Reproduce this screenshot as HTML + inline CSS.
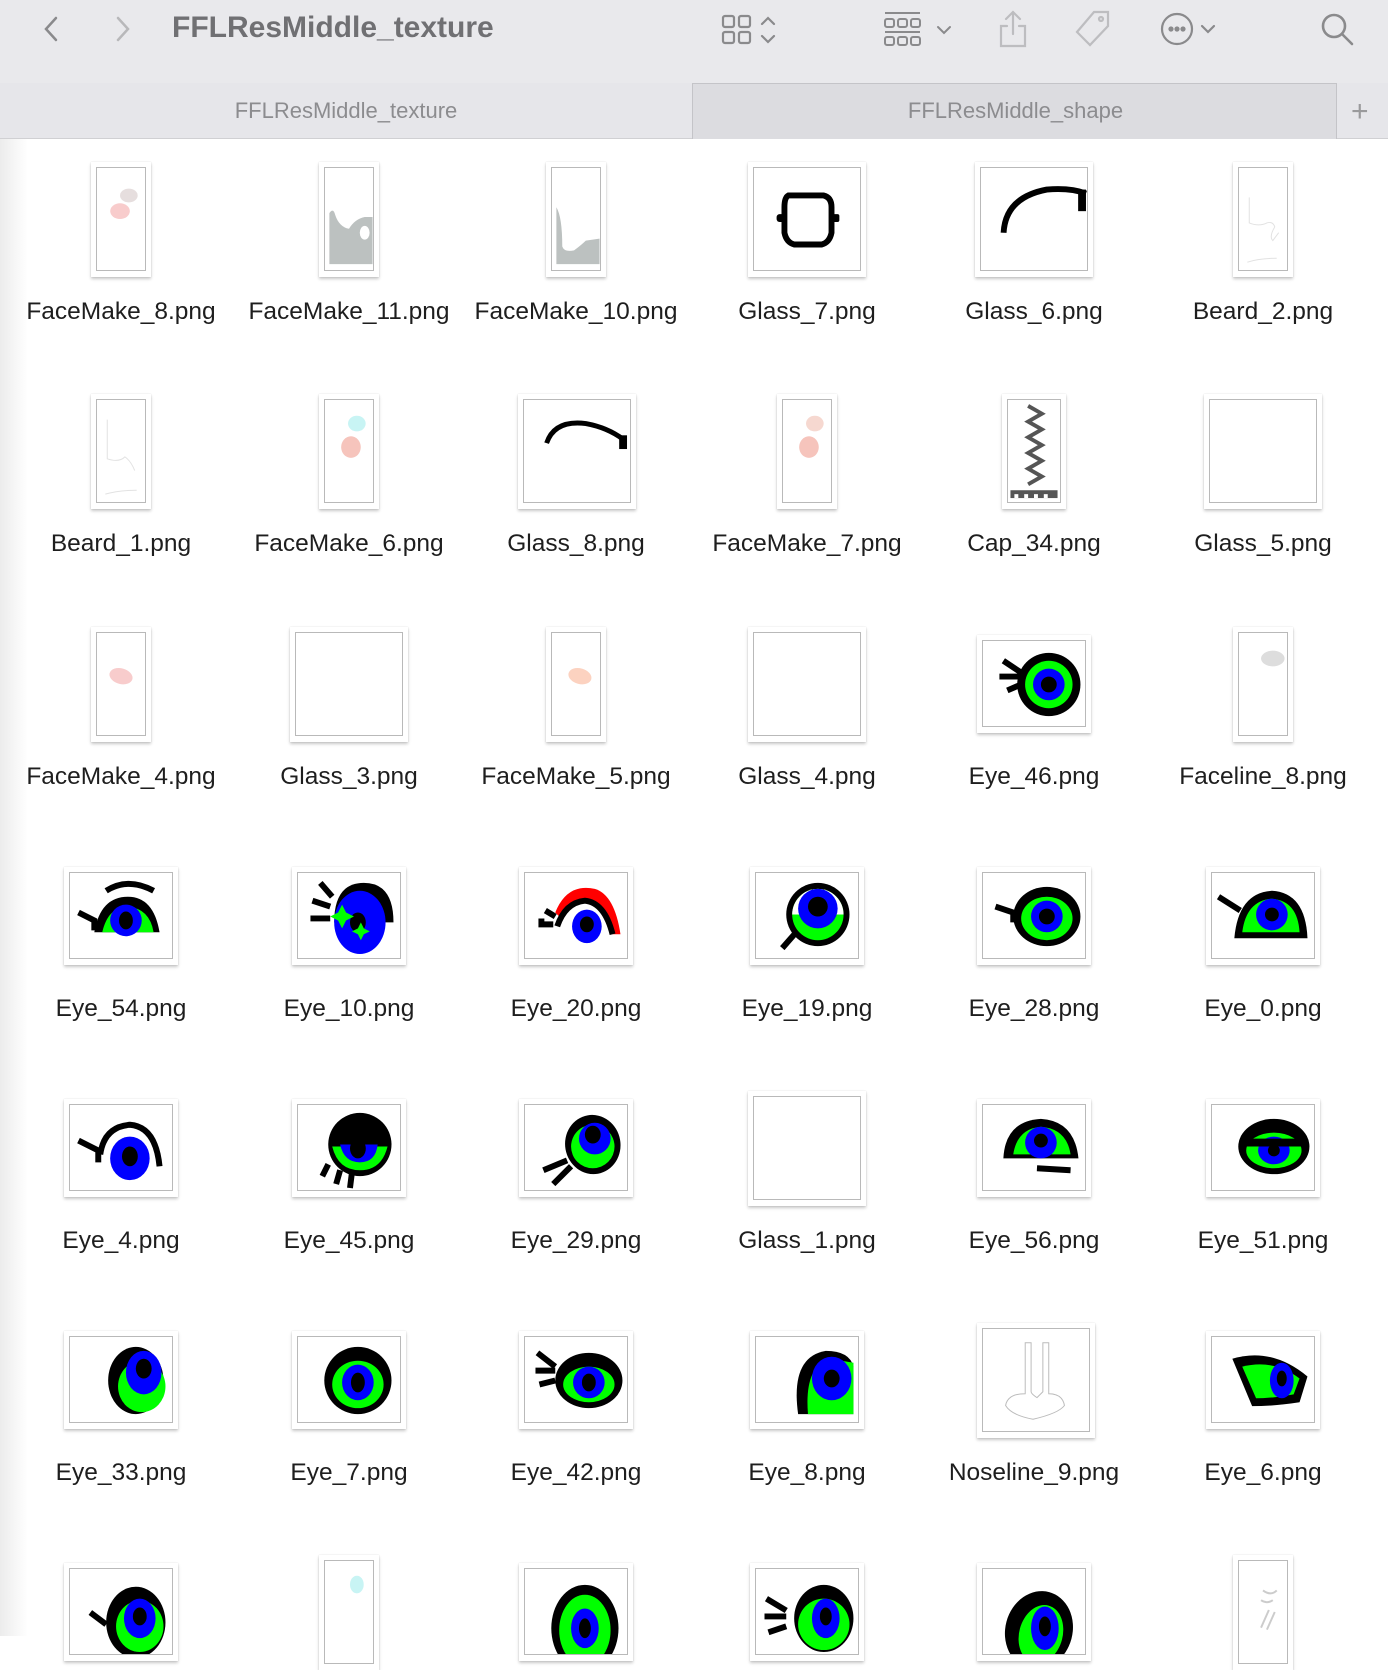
<!DOCTYPE html>
<html><head><meta charset="utf-8"><style>
*{margin:0;padding:0;box-sizing:border-box}
body{width:1388px;height:1636px;overflow:hidden;background:#fff;font-family:"Liberation Sans",Arial,sans-serif;position:relative}
.tb{position:absolute;left:0;top:0;width:1388px;height:83px;background:#e9e9ec}
.tabs{position:absolute;left:0;top:83px;width:1388px;height:56px;background:#e6e6ea;border-bottom:1px solid #d0d0d3}
.tab2{position:absolute;left:692px;top:0;width:645px;height:56px;background:#dcdce0;border-left:1px solid #c4c4c8;border-right:1px solid #c4c4c8;border-top:1px solid #c4c4c8}
.tt{position:absolute;top:15px;font-size:22px;color:#8c8c8f;text-align:center}
.side{position:absolute;left:0;top:139px;width:28px;height:1497px;background:linear-gradient(to right,#ececec,#fff)}
.i{position:absolute;background:#fff;box-shadow:0 2px 3px rgba(0,0,0,.22),0 0 1px rgba(0,0,0,.15)}
.b{position:absolute;left:5px;top:5px;right:5px;bottom:6px;border:1px solid #b9b9b9;overflow:hidden}
.b svg{width:100%;height:100%;display:block}
.l{position:absolute;width:228px;margin-left:-114px;text-align:center;font-size:24.5px;color:#1e1e1e;white-space:nowrap}
</style></head><body>
<div class="tb">
<svg style="position:absolute;left:40px;top:14px" width="24" height="30"><path d="M16 4 L6 15 L16 26" fill="none" stroke="#8a8a8c" stroke-width="2.5" stroke-linecap="round"/></svg>
<svg style="position:absolute;left:110px;top:14px" width="24" height="30"><path d="M8 4 L18 15 L8 26" fill="none" stroke="#b8b8ba" stroke-width="2.5" stroke-linecap="round"/></svg>
<div style="position:absolute;left:172px;top:11px;font-size:30px;font-weight:bold;color:#707073">FFLResMiddle_texture</div>
<svg style="position:absolute;left:720px;top:12px" width="70" height="36" fill="none" stroke="#8a8a8c" stroke-width="2.2"><rect x="3" y="4" width="11" height="11" rx="2"/><rect x="19" y="4" width="11" height="11" rx="2"/><rect x="3" y="20" width="11" height="11" rx="2"/><rect x="19" y="20" width="11" height="11" rx="2"/><path d="M42 12 L48 6 L54 12 M42 24 L48 30 L54 24" stroke-linecap="round"/></svg>
<svg style="position:absolute;left:882px;top:10px" width="76" height="40" fill="none" stroke="#8a8a8c" stroke-width="2"><path d="M3 3 H38"/><rect x="3" y="9" width="9" height="8" rx="2"/><rect x="16" y="9" width="9" height="8" rx="2"/><rect x="29" y="9" width="9" height="8" rx="2"/><path d="M3 22 H38"/><rect x="3" y="27" width="9" height="8" rx="2"/><rect x="16" y="27" width="9" height="8" rx="2"/><rect x="29" y="27" width="9" height="8" rx="2"/><path d="M56 17 L62 23 L68 17" stroke-linecap="round"/></svg>
<svg style="position:absolute;left:996px;top:8px" width="34" height="42" fill="none" stroke="#bdbdc0" stroke-width="2.2"><path d="M17 4 V26 M10 11 L17 4 L24 11 M11 18 H5 V38 H29 V18 H23" stroke-linecap="round"/></svg>
<svg style="position:absolute;left:1072px;top:8px" width="42" height="42" fill="none" stroke="#bdbdc0" stroke-width="2.2"><path d="M22 4 H36 V18 L18 37 L5 24 Z"/><circle cx="29" cy="11" r="2"/></svg>
<svg style="position:absolute;left:1158px;top:10px" width="70" height="40" fill="none" stroke="#8a8a8c" stroke-width="2.2"><circle cx="19" cy="19" r="15"/><circle cx="13" cy="19" r="1.5" fill="#8a8a8c"/><circle cx="19" cy="19" r="1.5" fill="#8a8a8c"/><circle cx="25" cy="19" r="1.5" fill="#8a8a8c"/><path d="M44 16 L50 22 L56 16" stroke-linecap="round"/></svg>
<svg style="position:absolute;left:1318px;top:10px" width="40" height="40" fill="none" stroke="#8a8a8c" stroke-width="2.6"><circle cx="16" cy="16" r="11"/><path d="M24 24 L34 34" stroke-linecap="round"/></svg>
</div>
<div class="tabs">
<div class="tt" style="left:0;width:692px">FFLResMiddle_texture</div>
<div class="tab2"><div class="tt" style="left:0;width:645px;top:14px">FFLResMiddle_shape</div></div>
<div style="position:absolute;left:1351px;top:12px;font-size:30px;color:#9a9a9c;font-weight:300">+</div>
</div>
<div class="side"></div>

<div class="i" style="left:91px;top:162px;width:60px;height:115px"><div class="b"><svg viewBox="0 0 48 104"><ellipse cx="32" cy="28" rx="9" ry="7" fill="#e6dede"/><ellipse cx="23" cy="44" rx="10" ry="8" fill="#f8cccc"/></svg></div></div>
<div class="l" style="left:121px;top:298px">FaceMake_8.png</div>
<div class="i" style="left:319px;top:162px;width:60px;height:115px"><div class="b"><svg viewBox="0 0 48 104"><path d="M4 46 Q8 40 10 48 Q14 60 24 62 Q30 52 40 50 L48 50 V98 H4 Z" fill="#bcc1c0"/><ellipse cx="40" cy="66" rx="5" ry="7" fill="#fff"/></svg></div></div>
<div class="l" style="left:349px;top:298px">FaceMake_11.png</div>
<div class="i" style="left:546px;top:162px;width:60px;height:115px"><div class="b"><svg viewBox="0 0 48 104"><path d="M4 40 Q10 50 10 80 Q12 86 22 84 Q30 78 34 74 L48 72 V98 H4 Z" fill="#bcc1c0"/></svg></div></div>
<div class="l" style="left:576px;top:298px">FaceMake_10.png</div>
<div class="i" style="left:748px;top:162px;width:118px;height:115px"><div class="b"><svg viewBox="0 0 106 104"><path d="M34 28 H70 Q78 30 78 40 V66 Q76 76 68 78 H40 Q32 76 30 66 V40 Q30 30 34 28 Z" fill="none" stroke="#000" stroke-width="6"/><rect x="22" y="47" width="8" height="8" rx="3"/><rect x="78" y="47" width="8" height="8" rx="2"/></svg></div></div>
<div class="l" style="left:807px;top:298px">Glass_7.png</div>
<div class="i" style="left:975px;top:162px;width:118px;height:115px"><div class="b"><svg viewBox="0 0 106 104"><path d="M22 66 Q24 30 66 22 Q90 20 106 26" fill="none" stroke="#000" stroke-width="6"/><rect x="98" y="22" width="8" height="22"/></svg></div></div>
<div class="l" style="left:1034px;top:298px">Glass_6.png</div>
<div class="i" style="left:1233px;top:162px;width:60px;height:115px"><div class="b"><svg viewBox="0 0 48 104"><path d="M10 30 V56 Q20 60 28 56 Q34 54 36 60 Q30 70 34 74 L40 66 M8 96 Q20 92 38 92" fill="none" stroke="#e2e2e2" stroke-width="1"/></svg></div></div>
<div class="l" style="left:1263px;top:298px">Beard_2.png</div>

<div class="i" style="left:91px;top:394px;width:60px;height:115px"><div class="b"><svg viewBox="0 0 48 104"><path d="M10 20 V60 Q22 64 28 58 Q34 62 38 72 M8 96 Q22 92 40 92" fill="none" stroke="#e2e2e2" stroke-width="1"/></svg></div></div>
<div class="l" style="left:121px;top:530px">Beard_1.png</div>
<div class="i" style="left:319px;top:394px;width:60px;height:115px"><div class="b"><svg viewBox="0 0 48 104"><ellipse cx="32" cy="24" rx="9" ry="8" fill="#c8f4f4"/><ellipse cx="26" cy="48" rx="10" ry="11" fill="#f6c4bc"/></svg></div></div>
<div class="l" style="left:349px;top:530px">FaceMake_6.png</div>
<div class="i" style="left:518px;top:394px;width:118px;height:115px"><div class="b"><svg viewBox="0 0 106 104"><path d="M22 44 Q30 20 62 24 Q84 28 100 40" fill="none" stroke="#000" stroke-width="5"/><rect x="96" y="36" width="8" height="14"/></svg></div></div>
<div class="l" style="left:576px;top:530px">Glass_8.png</div>
<div class="i" style="left:777px;top:394px;width:60px;height:115px"><div class="b"><svg viewBox="0 0 48 104"><ellipse cx="32" cy="24" rx="9" ry="8" fill="#f6d8d0"/><ellipse cx="26" cy="48" rx="10" ry="11" fill="#f6c4bc"/></svg></div></div>
<div class="l" style="left:807px;top:530px">FaceMake_7.png</div>
<div class="i" style="left:1002px;top:394px;width:64px;height:115px"><div class="b"><svg viewBox="0 0 52 104"><path d="M20 6 L34 14 L20 22 L34 30 L20 38 L34 46 L20 54 L34 62 L20 70 L34 78 L20 86" fill="none" stroke="#555" stroke-width="4"/><rect x="2" y="92" width="48" height="8" fill="#555"/><rect x="6" y="96" width="4" height="4" fill="#fff"/><rect x="16" y="96" width="4" height="4" fill="#fff"/><rect x="26" y="96" width="4" height="4" fill="#fff"/><rect x="36" y="96" width="4" height="4" fill="#fff"/></svg></div></div>
<div class="l" style="left:1034px;top:530px">Cap_34.png</div>
<div class="i" style="left:1204px;top:394px;width:118px;height:115px"><div class="b"></div></div>
<div class="l" style="left:1263px;top:530px">Glass_5.png</div>

<div class="i" style="left:91px;top:627px;width:60px;height:115px"><div class="b"><svg viewBox="0 0 48 104"><ellipse cx="24" cy="44" rx="12" ry="8" fill="#f8cccc" transform="rotate(15 24 44)"/></svg></div></div>
<div class="l" style="left:121px;top:763px">FaceMake_4.png</div>
<div class="i" style="left:290px;top:627px;width:118px;height:115px"><div class="b"></div></div>
<div class="l" style="left:349px;top:763px">Glass_3.png</div>
<div class="i" style="left:546px;top:627px;width:60px;height:115px"><div class="b"><svg viewBox="0 0 48 104"><ellipse cx="28" cy="44" rx="12" ry="8" fill="#fcd2c0" transform="rotate(15 28 44)"/></svg></div></div>
<div class="l" style="left:576px;top:763px">FaceMake_5.png</div>
<div class="i" style="left:748px;top:627px;width:118px;height:115px"><div class="b"></div></div>
<div class="l" style="left:807px;top:763px">Glass_4.png</div>
<div class="i" style="left:977px;top:635px;width:114px;height:98px"><div class="b"><svg viewBox="0 0 102 86"><circle cx="66" cy="44" r="32"/><circle cx="66" cy="44" r="24" fill="#0f0"/><circle cx="66" cy="44" r="16" fill="#00f"/><circle cx="66" cy="44" r="8"/><path d="M20 20 L38 32 M16 36 H36 M24 50 L38 44" stroke="#000" stroke-width="6"/></svg></div></div>
<div class="l" style="left:1034px;top:763px">Eye_46.png</div>
<div class="i" style="left:1233px;top:627px;width:60px;height:115px"><div class="b"><svg viewBox="0 0 48 104"><ellipse cx="34" cy="26" rx="12" ry="8" fill="#ddd"/></svg></div></div>
<div class="l" style="left:1263px;top:763px">Faceline_8.png</div>

<div class="i" style="left:64px;top:867px;width:114px;height:98px"><div class="b"><svg viewBox="0 0 102 86"><path d="M24 60 Q30 24 58 24 Q84 24 90 60 Z" fill="#000"/><path d="M32 60 Q38 34 58 34 Q80 36 84 60 Z" fill="#0f0"/><ellipse cx="56" cy="48" rx="16" ry="16" fill="#00f"/><ellipse cx="56" cy="48" rx="7" ry="9"/><path d="M36 18 Q58 4 84 18" fill="none" stroke="#000" stroke-width="6"/><path d="M8 40 L24 48 V58" fill="none" stroke="#000" stroke-width="6"/></svg></div></div>
<div class="l" style="left:121px;top:995px">Eye_54.png</div>
<div class="i" style="left:292px;top:867px;width:114px;height:98px"><div class="b"><svg viewBox="0 0 102 86"><path d="M36 50 Q36 10 66 10 Q96 10 96 50 Z"/><ellipse cx="62" cy="50" rx="26" ry="32" fill="#00f"/><ellipse cx="60" cy="50" rx="8" ry="10"/><path d="M40 40 L44 32 L48 40 L56 44 L48 48 L44 56 L40 48 L32 44 Z M60 56 L63 50 L66 56 L72 59 L66 62 L63 68 L60 62 L54 59 Z" fill="#0f0"/><path d="M22 10 L34 24 M14 28 L32 34 M12 46 H32" stroke="#000" stroke-width="6"/></svg></div></div>
<div class="l" style="left:349px;top:995px">Eye_10.png</div>
<div class="i" style="left:519px;top:867px;width:114px;height:98px"><div class="b"><svg viewBox="0 0 102 86"><path d="M30 40 Q42 10 70 16 Q90 22 96 62 L88 62 Q80 30 60 28 Q40 30 36 46 Z" fill="#f00"/><path d="M32 54 Q40 30 60 28 Q80 30 88 62" fill="none" stroke="#000" stroke-width="6"/><ellipse cx="62" cy="54" rx="15" ry="17" fill="#00f"/><ellipse cx="62" cy="52" rx="7" ry="8"/><path d="M16 46 V52 H28 M20 38 L30 44" fill="none" stroke="#000" stroke-width="6"/></svg></div></div>
<div class="l" style="left:576px;top:995px">Eye_20.png</div>
<div class="i" style="left:750px;top:867px;width:114px;height:98px"><div class="b"><svg viewBox="0 0 102 86"><circle cx="62" cy="42" r="32" fill="#000"/><circle cx="62" cy="42" r="26" fill="#0f0"/><path d="M36 42 A26 26 0 0 1 88 42" fill="#fff"/><circle cx="62" cy="36" r="20" fill="#00f"/><circle cx="62" cy="34" r="10"/><path d="M40 60 L26 76" stroke="#000" stroke-width="6"/></svg></div></div>
<div class="l" style="left:807px;top:995px">Eye_19.png</div>
<div class="i" style="left:977px;top:867px;width:114px;height:98px"><div class="b"><svg viewBox="0 0 102 86"><ellipse cx="64" cy="44" rx="34" ry="30"/><ellipse cx="64" cy="46" rx="26" ry="22" fill="#0f0"/><circle cx="64" cy="44" r="16" fill="#00f"/><circle cx="64" cy="44" r="8"/><path d="M12 34 L30 40 V50" fill="none" stroke="#000" stroke-width="6"/></svg></div></div>
<div class="l" style="left:1034px;top:995px">Eye_28.png</div>
<div class="i" style="left:1206px;top:867px;width:114px;height:98px"><div class="b"><svg viewBox="0 0 102 86"><path d="M22 66 Q26 20 60 18 Q94 20 96 66 Z"/><path d="M30 60 Q34 28 60 26 Q86 28 88 60 Z" fill="#0f0"/><circle cx="60" cy="42" r="16" fill="#00f"/><circle cx="60" cy="42" r="7"/><path d="M6 24 L28 38" stroke="#000" stroke-width="6"/></svg></div></div>
<div class="l" style="left:1263px;top:995px">Eye_0.png</div>

<div class="i" style="left:64px;top:1099px;width:114px;height:98px"><div class="b"><svg viewBox="0 0 102 86"><path d="M30 50 Q34 22 60 20 Q86 22 90 62" fill="none" stroke="#000" stroke-width="6"/><ellipse cx="60" cy="54" rx="20" ry="22" fill="#00f"/><ellipse cx="60" cy="52" rx="8" ry="10"/><path d="M8 36 L28 46 V58" fill="none" stroke="#000" stroke-width="6"/></svg></div></div>
<div class="l" style="left:121px;top:1227px">Eye_4.png</div>
<div class="i" style="left:292px;top:1099px;width:114px;height:98px"><div class="b"><svg viewBox="0 0 102 86"><ellipse cx="62" cy="40" rx="32" ry="32"/><path d="M34 42 Q40 66 62 66 Q84 66 90 42 Z" fill="#0f0"/><path d="M42 40 Q46 58 62 58 Q78 58 80 40 Z" fill="#00f"/><ellipse cx="60" cy="44" rx="8" ry="10"/><path d="M30 60 L24 72 M42 66 L38 80 M54 68 L52 84" stroke="#000" stroke-width="6"/></svg></div></div>
<div class="l" style="left:349px;top:1227px">Eye_45.png</div>
<div class="i" style="left:519px;top:1099px;width:114px;height:98px"><div class="b"><svg viewBox="0 0 102 86"><ellipse cx="68" cy="40" rx="28" ry="30" transform="rotate(-10 68 40)"/><ellipse cx="68" cy="42" rx="22" ry="22" fill="#0f0"/><ellipse cx="70" cy="34" rx="16" ry="16" fill="#00f"/><ellipse cx="68" cy="30" rx="8" ry="9"/><path d="M42 56 L18 66 M46 62 L28 80" stroke="#000" stroke-width="6"/></svg></div></div>
<div class="l" style="left:576px;top:1227px">Eye_29.png</div>
<div class="i" style="left:748px;top:1091px;width:118px;height:115px"><div class="b"></div></div>
<div class="l" style="left:807px;top:1227px">Glass_1.png</div>
<div class="i" style="left:977px;top:1099px;width:114px;height:98px"><div class="b"><svg viewBox="0 0 102 86"><path d="M20 54 Q22 16 58 14 Q92 16 96 54 Z"/><path d="M30 50 Q34 24 58 22 Q84 24 88 50 Z" fill="#0f0"/><circle cx="58" cy="38" r="16" fill="#00f"/><circle cx="58" cy="36" r="7"/><path d="M54 64 L88 66" stroke="#000" stroke-width="6"/></svg></div></div>
<div class="l" style="left:1034px;top:1227px">Eye_56.png</div>
<div class="i" style="left:1206px;top:1099px;width:114px;height:98px"><div class="b"><svg viewBox="0 0 102 86"><ellipse cx="62" cy="42" rx="36" ry="28"/><ellipse cx="62" cy="46" rx="28" ry="18" fill="#0f0"/><ellipse cx="62" cy="46" rx="16" ry="14" fill="#00f"/><circle cx="62" cy="46" r="6"/><path d="M30 38 H94" stroke="#000" stroke-width="8"/></svg></div></div>
<div class="l" style="left:1263px;top:1227px">Eye_51.png</div>

<div class="i" style="left:64px;top:1331px;width:114px;height:98px"><div class="b"><svg viewBox="0 0 102 86"><ellipse cx="66" cy="44" rx="28" ry="34"/><ellipse cx="72" cy="50" rx="24" ry="26" fill="#0f0"/><ellipse cx="74" cy="36" rx="18" ry="22" fill="#00f"/><ellipse cx="74" cy="32" rx="8" ry="10"/></svg></div></div>
<div class="l" style="left:121px;top:1459px">Eye_33.png</div>
<div class="i" style="left:292px;top:1331px;width:114px;height:98px"><div class="b"><svg viewBox="0 0 102 86"><ellipse cx="60" cy="44" rx="34" ry="34"/><ellipse cx="60" cy="48" rx="26" ry="24" fill="#0f0"/><ellipse cx="60" cy="46" rx="16" ry="18" fill="#00f"/><ellipse cx="60" cy="46" rx="7" ry="10"/></svg></div></div>
<div class="l" style="left:349px;top:1459px">Eye_7.png</div>
<div class="i" style="left:519px;top:1331px;width:114px;height:98px"><div class="b"><svg viewBox="0 0 102 86"><ellipse cx="64" cy="44" rx="34" ry="28"/><ellipse cx="64" cy="48" rx="26" ry="18" fill="#0f0"/><ellipse cx="64" cy="46" rx="16" ry="16" fill="#00f"/><ellipse cx="64" cy="46" rx="7" ry="9"/><path d="M12 16 L30 30 M10 34 H30 M14 48 L30 44" stroke="#000" stroke-width="6"/></svg></div></div>
<div class="l" style="left:576px;top:1459px">Eye_42.png</div>
<div class="i" style="left:750px;top:1331px;width:114px;height:98px"><div class="b"><svg viewBox="0 0 102 86"><path d="M42 78 Q34 20 70 14 Q94 14 98 30 V78 Z"/><path d="M52 78 Q48 30 74 22 L98 26 V78 Z" fill="#0f0"/><ellipse cx="76" cy="42" rx="20" ry="22" fill="#00f"/><ellipse cx="76" cy="42" rx="8" ry="9"/></svg></div></div>
<div class="l" style="left:807px;top:1459px">Eye_8.png</div>
<div class="i" style="left:977px;top:1323px;width:118px;height:115px"><div class="b"><svg viewBox="0 0 106 104"><path d="M42 14 V66 Q24 66 22 78 Q28 88 50 92 Q76 86 82 78 Q80 66 66 66 V14 H60 V64 L54 70 Q48 66 48 64 V14 Z" fill="none" stroke="#bbb" stroke-width="1"/></svg></div></div>
<div class="l" style="left:1034px;top:1459px">Noseline_9.png</div>
<div class="i" style="left:1206px;top:1331px;width:114px;height:98px"><div class="b"><svg viewBox="0 0 102 86"><path d="M20 22 Q60 10 96 40 L88 66 Q62 70 40 70 Z"/><path d="M30 30 Q62 22 88 42 L82 58 Q60 62 44 62 Z" fill="#0f0"/><ellipse cx="70" cy="44" rx="12" ry="18" fill="#00f"/><ellipse cx="70" cy="42" rx="5" ry="8"/></svg></div></div>
<div class="l" style="left:1263px;top:1459px">Eye_6.png</div>

<div class="i" style="left:64px;top:1563px;width:114px;height:98px"><div class="b"><svg viewBox="0 0 102 86"><ellipse cx="66" cy="54" rx="30" ry="36"/><ellipse cx="70" cy="58" rx="24" ry="26" fill="#0f0"/><ellipse cx="70" cy="50" rx="16" ry="20" fill="#00f"/><ellipse cx="70" cy="48" rx="7" ry="9"/><path d="M20 44 L36 56" stroke="#000" stroke-width="6"/></svg></div></div>
<div class="i" style="left:319px;top:1555px;width:60px;height:115px"><div class="b"><svg viewBox="0 0 48 104"><ellipse cx="32" cy="24" rx="7" ry="9" fill="#c8f4f4"/></svg></div></div>
<div class="i" style="left:519px;top:1563px;width:114px;height:98px"><div class="b"><svg viewBox="0 0 102 86"><ellipse cx="60" cy="60" rx="34" ry="44"/><ellipse cx="60" cy="62" rx="26" ry="36" fill="#0f0"/><ellipse cx="60" cy="60" rx="14" ry="20" fill="#00f"/><ellipse cx="60" cy="60" rx="6" ry="10"/></svg></div></div>
<div class="i" style="left:750px;top:1563px;width:114px;height:98px"><div class="b"><svg viewBox="0 0 102 86"><ellipse cx="68" cy="50" rx="30" ry="34"/><ellipse cx="68" cy="56" rx="26" ry="26" fill="#0f0"/><ellipse cx="70" cy="50" rx="14" ry="20" fill="#00f"/><ellipse cx="70" cy="48" rx="6" ry="9"/><path d="M10 30 L30 42 M8 48 H30 M12 64 L30 58" stroke="#000" stroke-width="6"/></svg></div></div>
<div class="i" style="left:977px;top:1563px;width:114px;height:98px"><div class="b"><svg viewBox="0 0 102 86"><ellipse cx="56" cy="62" rx="34" ry="40" transform="rotate(15 56 62)"/><ellipse cx="58" cy="66" rx="22" ry="30" fill="#0f0" transform="rotate(15 58 66)"/><ellipse cx="62" cy="60" rx="14" ry="22" fill="#00f"/><ellipse cx="62" cy="58" rx="6" ry="10"/></svg></div></div>
<div class="i" style="left:1233px;top:1555px;width:60px;height:115px"><div class="b"><svg viewBox="0 0 48 104"><path d="M24 30 Q32 36 38 30 M22 40 Q28 44 34 40 M30 50 L22 68 M36 52 L28 70" fill="none" stroke="#ccc" stroke-width="2"/></svg></div></div>
</body></html>
